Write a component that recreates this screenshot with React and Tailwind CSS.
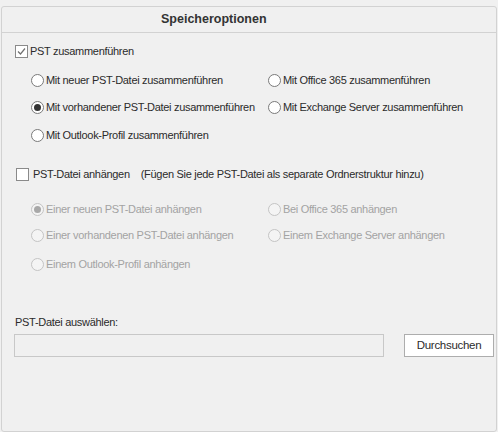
import React from 'react';

const font = { fontFamily: '"Liberation Sans", Arial, sans-serif', letterSpacing: '-0.3px' };

function Radio({ checked, disabled }) {
    return (
        <span
            className={`w-[13px] h-[13px] rounded-full border flex items-center justify-center shrink-0 ${
                disabled ? 'border-[#c4c4c4] bg-[#f4f4f4]' : 'border-[#7a7a7a] bg-white'
            }`}
        >
            {checked && (
                <span className={`w-[7px] h-[7px] rounded-full ${disabled ? 'bg-[#a8a8a8]' : 'bg-[#333]'}`} />
            )}
        </span>
    );
}

function Checkbox({ checked }) {
    return (
        <span className="w-[13px] h-[13px] border border-[#8a8a8a] bg-white flex items-center justify-center shrink-0">
            {checked && (
                <svg width="9" height="9" viewBox="0 0 9 9">
                    <path d="M1 4.5 L3.5 7 L8 1.5" fill="none" stroke="#707070" strokeWidth="1.2" />
                </svg>
            )}
        </span>
    );
}

function RadioRow({ label, checked, disabled }) {
    return (
        <div className={`flex items-center gap-[2px] ${disabled ? 'text-[#a3a3a3]' : 'text-[#2b2b2b]'}`}>
            <Radio checked={checked} disabled={disabled} />
            <span className="whitespace-nowrap">{label}</span>
        </div>
    );
}

export default function App() {
    return (
        <div className="w-[498px] h-[432px] bg-[#f0f0f0] pt-[6px] pl-[1px] text-[11px]" style={font}>
            <div className="w-[496px] h-[426px] border border-[#d2d2d2] rounded-[3px] flex flex-col">
                {/* Header */}
                <div className="h-[26px] border-b border-[#d2d2d2] flex items-center pl-[159px]">
                    <span className="font-bold text-[12.5px] text-[#333] tracking-normal">Speicheroptionen</span>
                </div>

                {/* Merge options */}
                <div className="mt-[8px] h-[20px] flex items-center gap-[2px] pl-[13px] text-[#2b2b2b]">
                    <Checkbox checked />
                    <span>PST zusammenführen</span>
                </div>

                <div className="grid grid-cols-[237px_1fr] pl-[29px]">
                    <div className="mt-[9px] h-[20px] flex items-center">
                        <RadioRow label="Mit neuer PST-Datei zusammenführen" />
                    </div>
                    <div className="mt-[9px] h-[20px] flex items-center">
                        <RadioRow label="Mit Office 365 zusammenführen" />
                    </div>
                    <div className="mt-[7px] h-[20px] flex items-center">
                        <RadioRow label="Mit vorhandener PST-Datei zusammenführen" checked />
                    </div>
                    <div className="mt-[7px] h-[20px] flex items-center">
                        <RadioRow label="Mit Exchange Server zusammenführen" />
                    </div>
                    <div className="mt-[8px] h-[20px] flex items-center">
                        <RadioRow label="Mit Outlook-Profil zusammenführen" />
                    </div>
                </div>

                {/* Append options */}
                <div className="mt-[19px] h-[20px] flex items-center pl-[14px] text-[#2b2b2b]">
                    <Checkbox />
                    <span className="ml-[4px]">PST-Datei anhängen</span>
                    <span className="ml-[11px]">(Fügen Sie jede PST-Datei als separate Ordnerstruktur hinzu)</span>
                </div>

                <div className="grid grid-cols-[237px_1fr] pl-[29px]">
                    <div className="mt-[15px] h-[20px] flex items-center">
                        <RadioRow label="Einer neuen PST-Datei anhängen" checked disabled />
                    </div>
                    <div className="mt-[15px] h-[20px] flex items-center">
                        <RadioRow label="Bei Office 365 anhängen" disabled />
                    </div>
                    <div className="mt-[6px] h-[20px] flex items-center">
                        <RadioRow label="Einer vorhandenen PST-Datei anhängen" disabled />
                    </div>
                    <div className="mt-[6px] h-[20px] flex items-center">
                        <RadioRow label="Einem Exchange Server anhängen" disabled />
                    </div>
                    <div className="mt-[9px] h-[20px] flex items-center">
                        <RadioRow label="Einem Outlook-Profil anhängen" disabled />
                    </div>
                </div>

                {/* File selection */}
                <div className="mt-[38px] h-[20px] flex items-center pl-[13px] text-[#2b2b2b]">PST-Datei auswählen:</div>
                <div className="mt-[2px] flex items-center pl-[12px]">
                    <div className="w-[370px] h-[23px] border border-[#c8c8c8] bg-[#f0f0f0]" />
                    <button className="ml-[20px] w-[90px] h-[23px] border border-[#adadad] bg-white text-[#2b2b2b] text-[11.5px]">
                        Durchsuchen
                    </button>
                </div>
            </div>
        </div>
    );
}
